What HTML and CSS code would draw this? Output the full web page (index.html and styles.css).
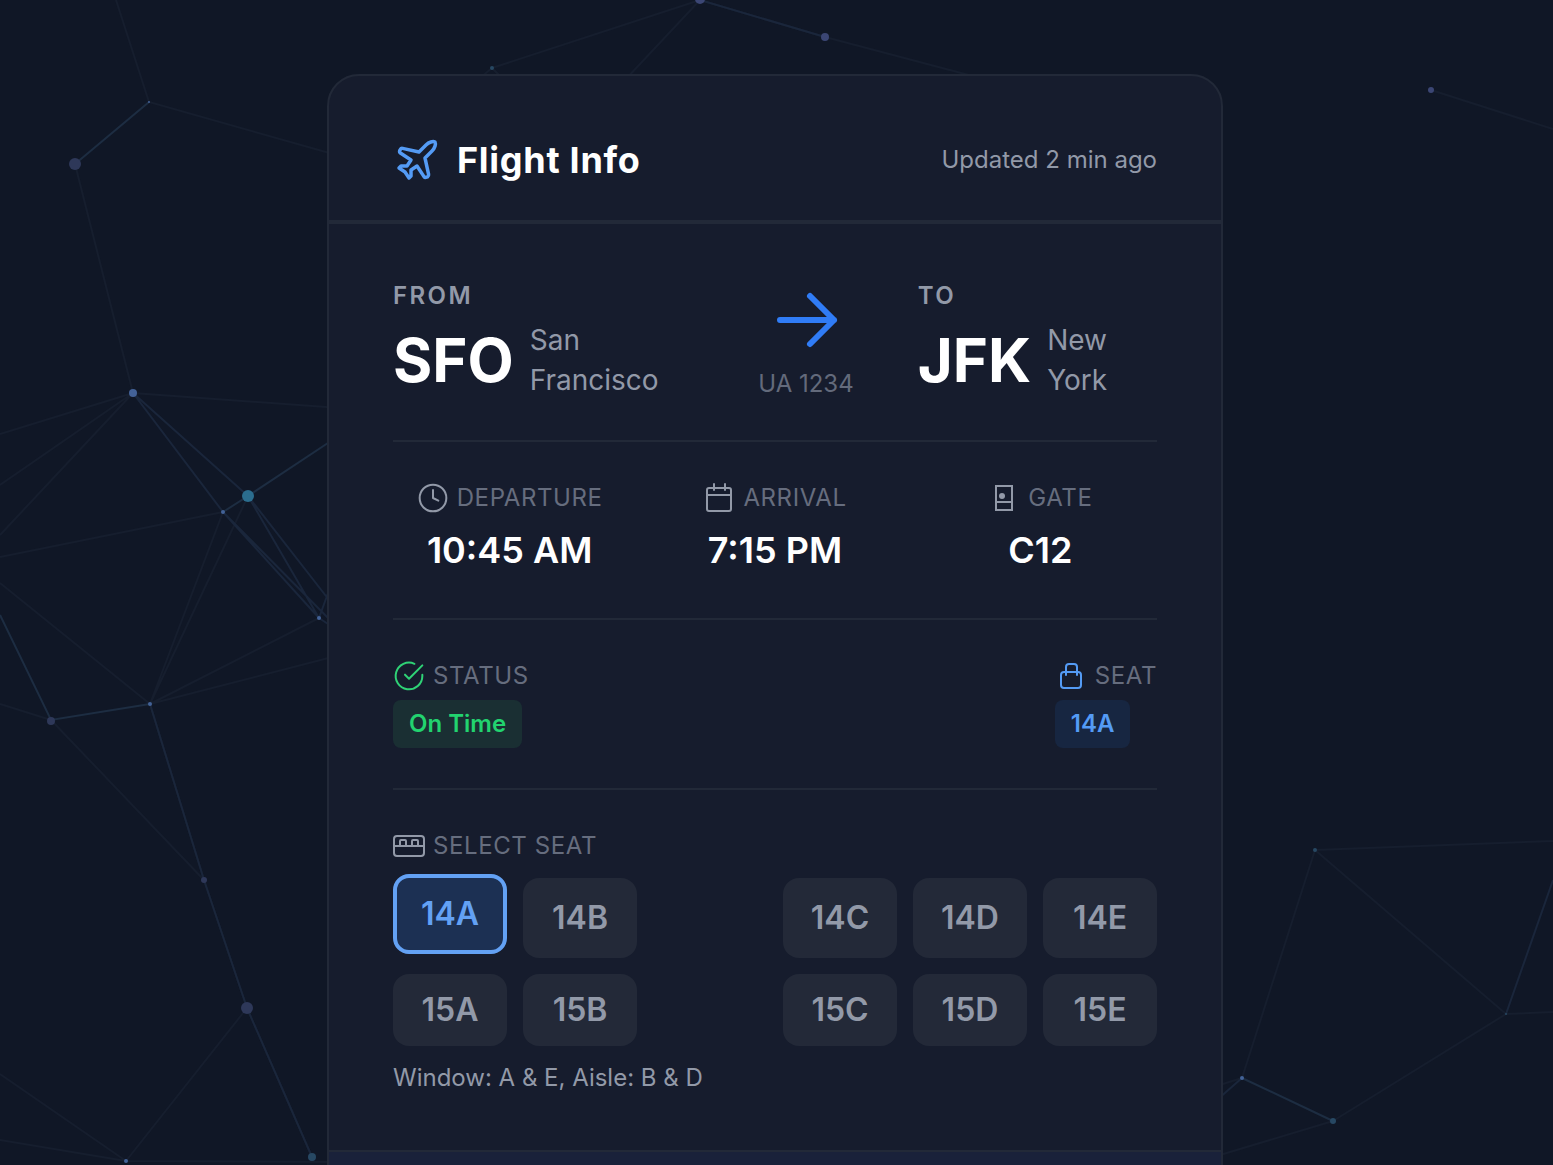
FILE: index.html
```html
<!DOCTYPE html>
<html lang="en">
  <head>
    <meta charset="UTF-8" />
    <meta name="viewport" content="width=device-width, initial-scale=1.0" />
    <title>Flight Info</title>
    <link rel="stylesheet" href="styles.css">
  </head>
  <body>
    <!-- particle network -->
    <svg class="network" viewBox="0 0 1553 1165" preserveAspectRatio="xMidYMin slice" aria-hidden="true">
      <g class="links faint">
        <path d="M116 0 149 102 340 156M75 164 133 393 340 408M133 393 0 434M133 393 0 485M133 393 0 535" />
        <path d="M223 512 0 557M0 583 150 704M0 704 51 720M150 704 223 512M150 704 248 496M150 704 319 618M150 704 340 655" />
        <path d="M51 720 204 880 150 704M204 880 247 1008 312 1157M247 1008 126 1161M126 1161 0 1074M126 1161 0 1140M126 1161 340 1162" />
        <path d="M492 68 480 78M492 68 502 78M492 68 700 0 625 80M825 37 700 0M825 37 980 78" />
        <path d="M1431 90 1553 129M1315 850 1553 841M1315 850 1506 1014 1553 1012M1315 850 1242 1078M1333 1121 1506 1014M1333 1121 1210 1158M1242 1078 1210 1088" />
      </g>
      <g class="links">
        <path d="M133 393 223 512M133 393 248 496M223 512 319 618M223 512 340 630M248 496 319 618M248 496 340 614M319 618 340 560M319 618 340 632" />
        <path d="M150 704 204 880M247 1008 312 1157M204 880 247 1008M1506 1014 1553 880M1242 1078 1210 1106M700 0 825 37" />
      </g>
      <g class="links strong">
        <path d="M75 164 149 102M223 512 248 496 340 435M0 615 51 720 150 704M1242 1078 1333 1121" />
      </g>
      <g class="indigo">
        <circle cx="75" cy="164" r="6" />
        <circle cx="247" cy="1008" r="6" />
        <circle cx="51" cy="721" r="4" />
        <circle cx="204" cy="880" r="3" />
        <circle class="bright" cx="700" cy="-1" r="5" />
        <circle class="bright" cx="825" cy="37" r="4" />
        <circle class="bright" cx="1431" cy="90" r="3" />
      </g>
      <g class="blue">
        <circle cx="133" cy="393" r="4" />
        <circle cx="149" cy="102" r="1" />
        <circle cx="223" cy="512" r="2" />
        <circle cx="319" cy="618" r="2" />
        <circle cx="150" cy="704" r="2" />
        <circle cx="126" cy="1161" r="2" />
        <circle cx="1242" cy="1078" r="2" />
      </g>
      <g class="cyan">
        <circle class="bright" cx="248" cy="496" r="6" />
        <circle cx="312" cy="1157" r="4" />
        <circle cx="492" cy="68" r="2" />
        <circle cx="1315" cy="850" r="2" />
        <circle cx="1333" cy="1121" r="3" />
        <circle cx="1506" cy="1014" r="1" />
      </g>
    </svg>

    <main class="card">
      <header class="card-header">
        <h1 class="title">
          <svg class="icon-plane" viewBox="0 0 24 24" aria-hidden="true">
            <path d="M17.8 19.2 16 11l3.5-3.5C21 6 21.5 4 21 3c-1-.5-3 0-4.5 1.5L13 8 4.8 6.2c-.5-.1-.9.1-1.1.5l-.3.5c-.2.5-.1 1 .3 1.3L9 12l-2 3H4l-1 1 3 2 2 3 1-1v-3l3-2 3.5 5.3c.3.4.8.5 1.3.3l.5-.2c.4-.3.6-.7.5-1.2z" />
          </svg>
          Flight Info
        </h1>
        <span class="updated">Updated 2 min ago</span>
      </header>

      <div class="card-body">
        <section class="route">
          <div>
            <div class="route-label">FROM</div>
            <div class="airport">
              <span class="code">SFO</span>
              <span class="city">San Francisco</span>
            </div>
          </div>
          <div class="route-middle">
            <svg class="icon-arrow" viewBox="0 0 80 80" aria-hidden="true">
              <path d="M14 40h54M44 16l24 24-24 24" />
            </svg>
            <span class="flight-no">UA 1234</span>
          </div>
          <div>
            <div class="route-label">TO</div>
            <div class="airport">
              <span class="code">JFK</span>
              <span class="city">New York</span>
            </div>
          </div>
        </section>

        <section class="times">
          <div class="time">
            <div class="label">
              <svg class="icon" viewBox="0 0 24 24" aria-hidden="true">
                <circle cx="12" cy="12" r="10" />
                <path d="M12 6v6l4 2" />
              </svg>
              DEPARTURE
            </div>
            <div class="value">10:45 AM</div>
          </div>
          <div class="time">
            <div class="label">
              <svg class="icon" viewBox="0 0 32 32" aria-hidden="true">
                <rect x="4" y="6" width="24" height="23" rx="2" />
                <path d="M4 13h24M11 2v6M22 2v6" />
              </svg>
              ARRIVAL
            </div>
            <div class="value">7:15 PM</div>
          </div>
          <div class="time">
            <div class="label">
              <svg class="icon" viewBox="0 0 32 32" aria-hidden="true">
                <path class="square" d="M8 4h16v24H8zM8 20h16" />
                <circle class="dot" cx="14" cy="14" r="3" />
              </svg>
              GATE
            </div>
            <div class="value">C12</div>
          </div>
        </section>

        <section class="status">
          <div>
            <div class="label">
              <svg class="icon green" viewBox="0 0 24 24" aria-hidden="true">
                <path d="M22 11.08V12a10 10 0 1 1-5.93-9.14" />
                <path d="M22 4 12 14.01l-3-3" />
              </svg>
              STATUS
            </div>
            <span class="badge badge-green">On Time</span>
          </div>
          <div>
            <div class="label">
              <svg class="icon sky" viewBox="0 0 32 32" aria-hidden="true">
                <rect x="6" y="12" width="20" height="16" rx="3" />
                <path d="M11 15V7a3 3 0 0 1 3-3h5a3 3 0 0 1 3 3v8" />
              </svg>
              SEAT
            </div>
            <span class="badge badge-blue">14A</span>
          </div>
        </section>

        <section class="seat-select">
          <div class="label">
            <svg class="icon" viewBox="0 0 32 32" aria-hidden="true">
              <rect x="1" y="6" width="30" height="20" rx="3" />
              <path d="M1 16h30M7 16v-5a1 1 0 0 1 1-1h4a1 1 0 0 1 1 1v5M19 16v-5a1 1 0 0 1 1-1h4a1 1 0 0 1 1 1v5" />
            </svg>
            SELECT SEAT
          </div>
          <div class="seats">
            <button type="button" class="seat selected" aria-pressed="true">14A</button>
            <button type="button" class="seat">14B</button>
            <span class="aisle"></span>
            <button type="button" class="seat">14C</button>
            <button type="button" class="seat">14D</button>
            <button type="button" class="seat">14E</button>
            <button type="button" class="seat">15A</button>
            <button type="button" class="seat">15B</button>
            <span class="aisle"></span>
            <button type="button" class="seat">15C</button>
            <button type="button" class="seat">15D</button>
            <button type="button" class="seat">15E</button>
          </div>
          <p class="note">Window: A &amp; E, Aisle: B &amp; D</p>
        </section>
      </div>

      <footer class="card-footer"></footer>
    </main>
  </body>
</html>
```
FILE: styles.css
```css
* {
  box-sizing: border-box;
  margin: 0;
  padding: 0;
}
body {
  height: 100vh;
  overflow: hidden;
  padding: 74px 3px 0 0;
  background-color: #101726;
  color: #fff;
  font-family: Inter, "Liberation Sans", sans-serif;
  font-size: 24px;
  line-height: 32px;
}

/* background network */
.network {
  position: absolute;
  top: 0;
  left: 0;
  width: 100%;
  height: 100%;
}
.links {
  fill: none;
  stroke: #1a263b;
  stroke-width: 2;
}
.links.faint {
  stroke: #161e2e;
}
.links.strong {
  stroke: #1d2d42;
}
.indigo {
  fill: #2e3859;
}
.indigo .bright {
  fill: #3b4674;
}
.blue {
  fill: #436298;
}
.cyan {
  fill: #274863;
}
.cyan .bright {
  fill: #2b6d8e;
}

/* card */
.card {
  position: relative;
  max-width: 896px;
  margin: 0 auto;
  background-color: #161c2d;
  border: 2px solid #222938;
  border-radius: 32px;
  overflow: hidden;
}
.card-header {
  display: flex;
  justify-content: space-between;
  align-items: center;
  padding: 60px 64px 36px;
  border-bottom: 2px solid #222938;
}
.title {
  display: flex;
  align-items: center;
  gap: 16px;
  font-size: 36px;
  font-weight: 700;
  line-height: 48px;
  letter-spacing: 0.02em;
}
.icon-plane {
  width: 48px;
  height: 48px;
  fill: none;
  stroke: #549bf5;
  stroke-width: 1.75;
  stroke-linecap: round;
  stroke-linejoin: round;
}
.updated,
.note {
  color: #9299a8;
}
.card-body {
  padding: 56px 64px;
  border-top: 2px solid #222938;
}

/* from - to */
.route {
  display: flex;
  justify-content: space-between;
  padding-bottom: 40px;
}
.route-label {
  margin-bottom: 8px;
  color: #9299a8;
  font-weight: 600;
  letter-spacing: 0.1em;
}
.airport {
  display: flex;
  align-items: center;
  gap: 16px;
}
.code {
  font-size: 60px;
  font-weight: 700;
  line-height: 72px;
}
.city {
  color: #9299a8;
  font-size: 28px;
  line-height: 40px;
}
.route-middle {
  display: flex;
  flex-direction: column;
  flex-shrink: 0;
  align-items: center;
  gap: 8px;
  padding: 0 64px;
}
.icon-arrow {
  width: 80px;
  height: 80px;
  fill: none;
  stroke: #307cf6;
  stroke-width: 6;
  stroke-linecap: round;
  stroke-linejoin: round;
}
.flight-no {
  color: #636a7b;
}

/* rows below the route */
.times,
.status,
.seat-select {
  border-top: 2px solid #222938;
  padding-top: 40px;
}
.times,
.status {
  padding-bottom: 40px;
}
.label {
  display: flex;
  align-items: center;
  gap: 8px;
  margin-bottom: 8px;
  color: #666d7e;
  letter-spacing: 0.025em;
}
.icon {
  width: 32px;
  height: 32px;
  fill: none;
  stroke: #9299a8;
  stroke-width: 2;
  stroke-linecap: round;
  stroke-linejoin: round;
}
.icon[viewBox="0 0 24 24"] {
  stroke-width: 1.5;
}
.icon.green {
  stroke: #2fd276;
}
.icon.sky {
  stroke: #549bf5;
}
.icon .square {
  stroke-linejoin: miter;
}
.icon .dot {
  fill: #9299a8;
  stroke: none;
}
.times {
  display: grid;
  grid-template-columns: repeat(3, 1fr);
  gap: 32px;
}
.time .label {
  justify-content: center;
}
.value {
  font-size: 36px;
  font-weight: 600;
  line-height: 56px;
  text-align: center;
}
.status {
  display: flex;
  justify-content: space-between;
}
.badge {
  display: inline-block;
  padding: 8px 16px;
  border-radius: 8px;
  font-weight: 600;
  vertical-align: top;
}
.badge-green {
  background-color: #1a2f33;
  color: #22d36f;
}
.badge-blue {
  background-color: #172641;
  color: #549bf5;
}

/* seats */
.seat-select .label {
  margin-bottom: 16px;
}
.seats {
  display: grid;
  grid-template-columns: repeat(6, 1fr);
  gap: 16px;
}
.seat {
  padding: 12px 0;
  border: none;
  border-radius: 16px;
  background-color: #232938;
  color: #9299a8;
  font-family: inherit;
  font-size: 32px;
  font-weight: 600;
  line-height: 48px;
  cursor: pointer;
}
.seat.selected {
  border: 4px solid #63a1f4;
  background-color: #1c3053;
  color: #63a1f4;
  transform: translateY(-4px);
}
.note {
  margin-top: 16px;
}
.card-footer {
  height: 96px;
  border-top: 2px solid #222938;
  background-color: #19213a;
}
```
